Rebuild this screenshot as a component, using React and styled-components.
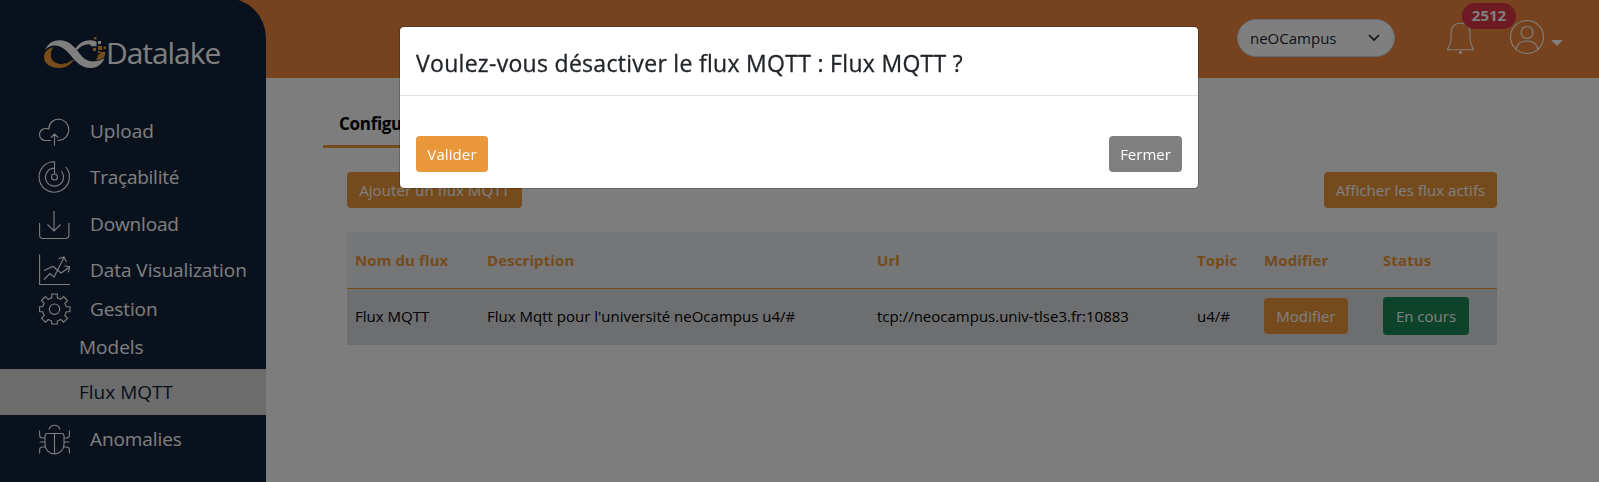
import React from "react";
import styled, { createGlobalStyle, css } from "styled-components";

const Global = createGlobalStyle`
  *, *::before, *::after { box-sizing: border-box; }
  body {
    margin: 0;
    background: #fafafa;
    color: #000;
    font-family: "Segoe UI", "Open Sans", "Noto Sans", sans-serif;
    font-size: 15px;
    line-height: 24px;
    overflow: hidden;
  }
  button { font: inherit; }
`;

const Page = styled.div`
  display: flex;
  height: 482px;
  overflow: hidden;
`;

const Sidebar = styled.nav`
  flex: 0 0 266px;
  margin-top: -2px;
  padding-top: 2px;
  border-top-right-radius: 40px;
  background: #12223a;
  color: #fff;
`;

const SideWrap = styled.div`
  display: flex;
  flex: 0 0 266px;
  background: linear-gradient(#ee873d 78px, #fafafa 78px);
`;

const Brand = styled.div`
  display: flex;
  align-items: center;
  height: 108px;
  padding: 0 0 2px 44px;
`;

const BrandName = styled.span`
  font-size: 30px;
  line-height: 40px;
  letter-spacing: -1.05px;
`;

const Item = styled.a`
  display: flex;
  align-items: center;
  height: ${(p) => p.$h || 46}px;
  padding-left: ${(p) => (p.$sub ? 79 : 39)}px;
  gap: 19px;
  font-size: 19px;
  letter-spacing: ${(p) => p.$track || 0}px;
  white-space: nowrap;
  ${(p) =>
    p.$active &&
    css`
      background: #d8d8d8;
      color: #12223a;
    `}
`;

const Icon = styled.svg`
  flex: none;
  display: block;
  fill: none;
  stroke: currentColor;
  stroke-width: ${(p) => p.$w || 1.1};
  overflow: visible;
`;

const Main = styled.div`
  flex: 1;
  min-width: 0;
`;

const Header = styled.header`
  display: flex;
  align-items: flex-start;
  justify-content: flex-end;
  height: 78px;
  padding: 19px 36px 0 0;
  background: #ee873d;
  color: #fff;
`;

const Select = styled.div`
  display: flex;
  align-items: center;
  justify-content: space-between;
  width: 158px;
  height: 38px;
  padding: 0 14px 0 12px;
  border: 1px solid #ced4da;
  border-radius: 19px;
  background: #fff;
  color: #212529;
`;

const Bell = styled.div`
  position: relative;
  margin: 3px 36px 0 52px;
`;

const Badge = styled.span`
  position: absolute;
  left: 15px;
  top: -19px;
  width: 54px;
  height: 26px;
  border-radius: 13px;
  background: #dc3545;
  font-size: 15px;
  font-weight: 700;
  line-height: 25px;
  text-align: center;
`;

const User = styled.div`
  display: flex;
  align-items: flex-start;
  gap: 7px;
  padding-top: 1px;
`;

const Caret = styled.i`
  margin-top: 20px;
  border: 6px solid transparent;
  border-top-color: #fff;
  border-bottom: 0;
`;

const Content = styled.main`
  padding: 16px 102px 0 81px;
`;

const Tabs = styled.div`
  display: flex;
  margin-left: -24px;
`;

const Tab = styled.div`
  height: 54px;
  padding: 18px 16px 0;
  border-bottom: 3px solid #ea973b;
  font-size: 17px;
  font-weight: 700;
  letter-spacing: -0.3px;
`;

const Actions = styled.div`
  display: flex;
  justify-content: space-between;
  margin: 24px 0;
`;

const Button = styled.button`
  display: block;
  width: ${(p) => p.$w}px;
  height: ${(p) => p.$h || 36}px;
  padding: 0;
  border: 0;
  border-radius: 4px;
  background: ${(p) => p.$bg || "#ea973b"};
  color: #fff;
  font-size: 15px;
  letter-spacing: ${(p) => p.$track || 0}px;
  white-space: nowrap;
`;

const Row = styled.div`
  display: grid;
  grid-template-columns: 132px 390px 320px 67px 119px 122px;
  align-items: center;
  height: 56px;
  padding-bottom: 2px;
  background: #dbdde0;
`;

const HeadRow = styled(Row)`
  height: 57px;
  padding-bottom: 0;
  border-bottom: 1px solid #ea973b;
  background: #e9ecef;
  color: #ea973b;
  font-weight: 700;
  letter-spacing: 0.1px;
`;

const Cell = styled.div`
  padding-left: 8px;
  white-space: nowrap;
`;

const Backdrop = styled.div`
  position: fixed;
  inset: 0;
  padding: 26px 1px 0 0;
  background: rgba(0, 0, 0, 0.5);
`;

const Dialog = styled.section`
  width: 800px;
  height: 163px;
  margin: 0 auto;
  border: 1px solid rgba(0, 0, 0, 0.2);
  border-radius: 5px;
  background: #fff;
  background-clip: padding-box;
`;

const DialogTitle = styled.h2`
  height: 69px;
  margin: 0;
  padding: 18px 16px 0;
  border-bottom: 1px solid #dee2e6;
  color: #212529;
  font-size: 23px;
  font-weight: 500;
  line-height: 36px;
  letter-spacing: 0.3px;
  -webkit-text-stroke: 0.3px currentColor;
  white-space: nowrap;
`;

const DialogActions = styled.div`
  display: flex;
  justify-content: space-between;
  padding: 40px 16px 0;
`;

const Logo = () => (
  <svg width="62" height="32" viewBox="0 0 62 32">
    <path fill="#f39a35" d="M9.500 10.500C4 11 0 15 0 20c0 7 7 11 15 11 7 0 11-3 15-8-2-.500-3 1-5 2l-3 1.800-2-.8-1 1.200C12 27.500 7 24 6.800 18.500 6.700 15 7.500 12.500 9.500 10.500z" />
    <path fill="#fff" d="M1 13C4 6 10 3 16 3.300c8 0 13 5 18 11 4 6 8 9.700 14 10.200 5 0 9-1 12.500-3.500C58.500 27 53 31 47 31c-9 0-14-5-19-11C23 14 19 9.500 12 8.500 8 8 4 9.500 1 13z" />
    <path fill="#fff" d="M31.500 11.500C35.500 6 40 3.300 46 3.300c2.500 0 4.500.5 6.500 1.500v4.500h-5l-2-2c-5-.3-9 1.700-12.500 6z" />
    <path fill="#f39a35" d="M53.500 17.500h2l1-2.500h4.500c1 4.500-2 7.500-9.500 8.500 2-1.800 3-3.800 2-6zM50 0h2.500v2.500H50zM49 11h3v3h-3zM54 9h4v4h-4zM59.500 9.500H62V12h-2.500zM54 14h2v2h-2z" />
    <path fill="#fff" d="M54 4h3v3h-3z" />
  </svg>
);

const Glyph = ({ children, size = 32, view = 32 }) => (
  <Icon width={size} height={size} viewBox={`0 0 ${view} ${view}`}>{children}</Icon>
);

const CloudIcon = () => (
  <Glyph>
    <path d="M12 25.500H6.500a6 6 0 0 1 0-12q2-.2 3.300.4C10 8 14.500 4 20 4a10.800 10.800 0 0 1 0 21.500h-1.500M15.500 30.500V19M12 22.500l3.500-3.500 3.500 3.500" />
  </Glyph>
);

const RadarIcon = () => (
  <Glyph>
    <path d="M15.500 12.500V.7A15.200 15.200 0 1 0 26.800 6M15.500 7.100a9 9 0 1 0 6.600 2.900" />
    <circle cx="15.500" cy="16" r="3" />
  </Glyph>
);

const DownloadIcon = () => (
  <Glyph>
    <path d="M.6 15v12q0 3.500 3.500 3.500h22.300q3.500 0 3.500-3.500V15M15 3v20M8.500 16.500l6.500 6.500 6.500-6.500" />
  </Glyph>
);

const ChartIcon = () => (
  <Glyph>
    <path d="M.6.500V30.500H31M5 16.500l9-4 8 6.500 8-5.500M25.500 12l5 .800-1 5.500M5 25.500l6-6 4 3.500L25 3.500M19.500 4.800L25 3l2.500 5" />
  </Glyph>
);

const GearIcon = () => (
  <Glyph>
    <path d="M12.700 1h5.600v3.800l3.500 1.500 2.800-2.700 3.900 3.900-2.700 2.800 1.500 3.500h3.700v5h-3.700l-1.500 3.700 2.700 2.800-3.900 3.900-2.800-2.700-3.500 1.500V31h-5.600v-3l-3.500-1.500-2.800 2.700-3.900-3.900 2.700-2.800-1.500-3.700H.6v-5h3.100l1.500-3.500-2.700-2.800 3.900-3.900 2.800 2.700 3.500-1.500z" />
    <circle cx="15.500" cy="16.200" r="5.200" />
  </Glyph>
);

const BugIcon = () => (
  <Glyph>
    <path d="M10 6.500a5.700 5.700 0 0 1 11 0M8 10.500h15q2 0 2 3v8a9.500 9.500 0 0 1-19 0v-8q0-3 2-3zM15.500 10.500V31M.6 7.500v4.500q0 3 3 3H6M30.400 7.500v4.500q0 3-3 3H25M.6 19H6M25 19h5.400M6 24H3.600q-3 0-3 3v3.500M25 24h2.400q3 0 3 3v3.500" />
  </Glyph>
);

export default function App() {
  return (
    <>
      <Global />
      <Page>
        <SideWrap>
          <Sidebar>
            <Brand>
              <Logo />
              <BrandName>Datalake</BrandName>
            </Brand>
            <Item><CloudIcon />Upload</Item>
            <Item $track={-0.25}><RadarIcon />Traçabilité</Item>
            <Item $h={47} $track={-0.15}><DownloadIcon />Download</Item>
            <Item $track={-0.05}><ChartIcon />Data Visualization</Item>
            <Item $h={32} $track={-0.1}><GearIcon />Gestion</Item>
            <Item $h={44} $sub>Models</Item>
            <Item $sub $active>Flux MQTT</Item>
            <Item $h={48} $track={-0.1}><BugIcon />Anomalies</Item>
          </Sidebar>
        </SideWrap>
        <Main>
          <Header>
            <Select>
              neOCampus
              <Icon $w={1.7} width="12" height="8" viewBox="0 0 12 8"><path d="M1 1l5 5 5-5" /></Icon>
            </Select>
            <Bell>
              <Icon width="27" height="33" viewBox="0 0 27 33">
                <path d="M13.500 1.200C7.500 1.200 4 5 4 11v6c0 4-1 6-2.500 8.500-.7 1.300-1 1.700-1 2.300h26c0-.6-.3-1-1-2.300C24 23 23 21 23 17v-6c0-6-3.500-9.800-9.500-9.800z" />
                <circle cx="13.500" cy="30.500" r="1" fill="currentColor" />
              </Icon>
              <Badge>2512</Badge>
            </Bell>
            <User>
              <Icon width="34" height="34" viewBox="0 0 34 34">
                <circle cx="17" cy="17" r="16.500" />
                <circle cx="17" cy="12.500" r="6" />
                <path d="M6 29.500c1-5 5-8.500 11-8.500s10 3.500 11 8.500" />
              </Icon>
              <Caret />
            </User>
          </Header>
          <Content>
            <Tabs><Tab>Configuration</Tab></Tabs>
            <Actions>
              <Button $w={175} $track={0.08}>Ajouter un flux MQTT</Button>
              <Button $w={173} $track={0.06}>Afficher les flux actifs</Button>
            </Actions>
            <HeadRow>
              <Cell>Nom du flux</Cell>
              <Cell>Description</Cell>
              <Cell>Url</Cell>
              <Cell>Topic</Cell>
              <Cell>Modifier</Cell>
              <Cell>Status</Cell>
            </HeadRow>
            <Row>
              <Cell>Flux MQTT</Cell>
              <Cell>Flux Mqtt pour l'université neOcampus u4/#</Cell>
              <Cell>tcp://neocampus.univ-tlse3.fr:10883</Cell>
              <Cell>u4/#</Cell>
              <Cell><Button $w={84} $track={0.1}>Modifier</Button></Cell>
              <Cell><Button $w={86} $h={38} $bg="#198754">En cours</Button></Cell>
            </Row>
          </Content>
        </Main>
      </Page>
      <Backdrop>
        <Dialog>
          <DialogTitle>Voulez-vous désactiver le flux MQTT : Flux MQTT ?</DialogTitle>
          <DialogActions>
            <Button $w={72} $track={0.1}>Valider</Button>
            <Button $w={73} $bg="#808080">Fermer</Button>
          </DialogActions>
        </Dialog>
      </Backdrop>
    </>
  );
}
